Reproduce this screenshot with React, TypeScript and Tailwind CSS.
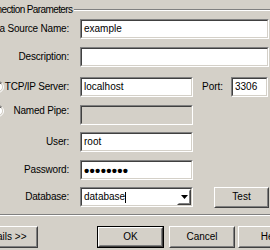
import type { ReactNode } from "react";

const sunkenOuter = "border border-[#808080] border-r-white border-b-white";
const sunkenInner = "border border-[#404040] border-r-[#d4d0c8] border-b-[#d4d0c8]";

function Field({ className = "", disabled = false, children }: { className?: string; disabled?: boolean; children?: ReactNode }) {
  return (
    <div className={`h-[20px] shrink-0 ${sunkenOuter} ${className}`}>
      <div className={`h-full flex items-center pl-[2px] ${sunkenInner} ${disabled ? "bg-[#d4d0c8]" : "bg-white"}`}>
        {children}
      </div>
    </div>
  );
}

function Btn({ className = "", isDefault = false, children }: { className?: string; isDefault?: boolean; children: ReactNode }) {
  const bevel = (
    <div className="h-full border border-white border-r-[#404040] border-b-[#404040]">
      <div className="h-full flex items-center justify-center border border-transparent border-r-[#808080] border-b-[#808080]">
        {children}
      </div>
    </div>
  );
  return (
    <div className={`shrink-0 whitespace-nowrap ${isDefault ? "border border-black" : ""} ${className}`}>
      {bevel}
    </div>
  );
}

function Radio() {
  return (
    <svg width="12" height="12" viewBox="0 0 12 12" className="ml-[21px] mr-[-12px] shrink-0">
      <circle cx="6" cy="6" r="4.5" fill="#fff" />
      <path d="M2.11 9.89 A5.5 5.5 0 0 1 9.89 2.11" fill="none" stroke="#808080" />
      <path d="M9.89 2.11 A5.5 5.5 0 0 1 2.11 9.89" fill="none" stroke="#fff" />
      <path d="M2.82 9.18 A4.5 4.5 0 0 1 9.18 2.82" fill="none" stroke="#404040" />
      <path d="M9.18 2.82 A4.5 4.5 0 0 1 2.82 9.18" fill="none" stroke="#d4d0c8" />
    </svg>
  );
}

function Row({ label, radio = false, labelTop = false, className = "", children }: { label: string; radio?: boolean; labelTop?: boolean; className?: string; children: ReactNode }) {
  return (
    <div className={`flex items-center h-[20px] ${className}`}>
      <div className={`w-[98px] shrink-0 flex items-center ${labelTop ? "self-start" : ""}`}>
        {radio && <Radio />}
        <span className="ml-auto whitespace-nowrap tracking-[-0.2px]">{label}</span>
      </div>
      <div className="ml-[11px] flex items-center">{children}</div>
    </div>
  );
}

export default function App() {
  return (
    <div className="w-[270px] h-[250px] overflow-hidden bg-[#d4d0c8] text-black text-[10px] leading-[12px] pt-[4px] font-['Liberation_Sans',Arial,sans-serif]">
      <fieldset className="ml-[-30px] w-[330px] border border-[#808080] shadow-[inset_1px_1px_0_#fff,1px_1px_0_#fff] pt-[4px] pb-[7px]">
        <legend className="ml-[7px] px-[2px] leading-[11px] tracking-[-0.6px] bg-[#d4d0c8] whitespace-nowrap">Connection Parameters</legend>

        <Row label="Data Source Name:">
          <Field className="w-[189px]">example</Field>
        </Row>
        <Row label="Description:" className="mt-[8px]">
          <Field className="w-[189px]" />
        </Row>
        <Row label="TCP/IP Server:" radio className="mt-[10px]">
          <Field className="w-[113px]">localhost</Field>
          <span className="ml-[9px] w-[29px]">Port:</span>
          <Field className="w-[37px]">3306</Field>
        </Row>
        <Row label="Named Pipe:" radio labelTop className="mt-[8px]">
          <Field className="w-[113px]" disabled />
        </Row>
        <Row label="User:" className="mt-[7px]">
          <Field className="w-[113px]">root</Field>
        </Row>
        <Row label="Password:" className="mt-[8px]">
          <Field className="w-[113px]">
            <span className="text-[15px] leading-none font-bold tracking-[0.3px]">••••••••</span>
          </Field>
        </Row>
        <Row label="Database:" className="mt-[7px]">
          <Field className="w-[113px]">
            <div className="flex-1 flex items-center">
              database
              <span className="inline-block w-px h-[11px] bg-black" />
            </div>
            <Btn className="w-[14px] h-full">
              <svg width="7" height="4" viewBox="0 0 7 4">
                <path d="M0 0 H7 L3.5 4 Z" fill="#000" />
              </svg>
            </Btn>
          </Field>
          <Btn className="ml-[21px] w-[55px] h-[21px]">Test</Btn>
        </Row>
      </fieldset>

      <div className="flex mt-[11px] ml-[-30px]">
        <Btn className="w-[68px] h-[22px]">Details &gt;&gt;</Btn>
        <Btn isDefault className="ml-[59px] w-[67px] h-[22px]">OK</Btn>
        <Btn className="ml-[5px] w-[66px] h-[22px]">Cancel</Btn>
        <Btn className="ml-[3px] w-[66px] h-[22px]">Help</Btn>
      </div>
    </div>
  );
}
